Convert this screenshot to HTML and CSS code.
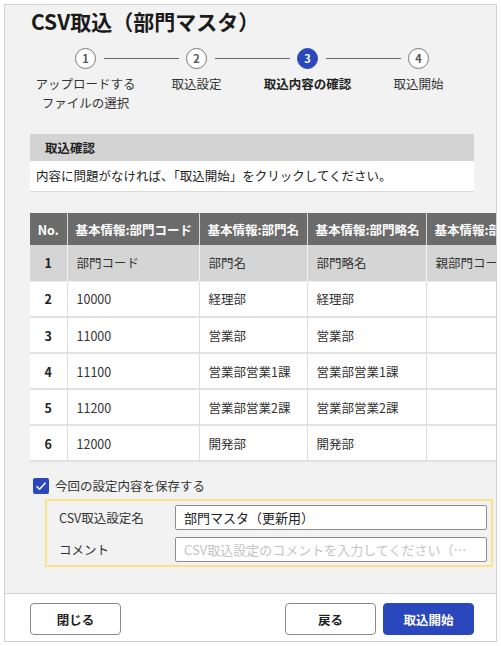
FILE: index.html
```html
<!DOCTYPE html>
<html lang="ja">
<head>
    <meta charset="UTF-8">
    <meta name="viewport" content="width=device-width, initial-scale=1.0">
    <title>CSV取込（部門マスタ）</title>
    <link rel="stylesheet" href="styles.css">
</head>
<body>
    <div class="dialog">
        <div class="dialog-body">
            <h1 class="title">CSV取込（部門マスタ）</h1>

            <!-- Steps -->
            <ol class="steps">
                <li class="step">
                    <span class="step-num">1</span>
                    <span class="step-label">アップロードする<br>ファイルの選択</span>
                </li>
                <li class="step">
                    <span class="step-num">2</span>
                    <span class="step-label">取込設定</span>
                </li>
                <li class="step active">
                    <span class="step-num">3</span>
                    <span class="step-label">取込内容の確認</span>
                </li>
                <li class="step">
                    <span class="step-num">4</span>
                    <span class="step-label">取込開始</span>
                </li>
            </ol>

            <!-- Confirm message -->
            <div class="notice">
                <div class="notice-head">取込確認</div>
                <div class="notice-text">内容に問題がなければ、「取込開始」をクリックしてください。</div>
            </div>

            <!-- Preview table -->
            <div class="table-wrap">
                <table class="preview">
                    <colgroup>
                        <col class="c-no">
                        <col class="c-code">
                        <col class="c-name">
                        <col class="c-short">
                        <col class="c-parent">
                    </colgroup>
                    <thead>
                        <tr>
                            <th>No.</th>
                            <th>基本情報:部門コード</th>
                            <th>基本情報:部門名</th>
                            <th>基本情報:部門略名</th>
                            <th>基本情報:部門親コード</th>
                        </tr>
                    </thead>
                    <tbody>
                        <tr class="title-row">
                            <td class="no">1</td>
                            <td>部門コード</td>
                            <td>部門名</td>
                            <td>部門略名</td>
                            <td>親部門コード</td>
                        </tr>
                        <tr>
                            <td class="no">2</td>
                            <td>10000</td>
                            <td>経理部</td>
                            <td>経理部</td>
                            <td></td>
                        </tr>
                        <tr>
                            <td class="no">3</td>
                            <td>11000</td>
                            <td>営業部</td>
                            <td>営業部</td>
                            <td></td>
                        </tr>
                        <tr>
                            <td class="no">4</td>
                            <td>11100</td>
                            <td>営業部営業1課</td>
                            <td>営業部営業1課</td>
                            <td></td>
                        </tr>
                        <tr>
                            <td class="no">5</td>
                            <td>11200</td>
                            <td>営業部営業2課</td>
                            <td>営業部営業2課</td>
                            <td></td>
                        </tr>
                        <tr>
                            <td class="no">6</td>
                            <td>12000</td>
                            <td>開発部</td>
                            <td>開発部</td>
                            <td></td>
                        </tr>
                    </tbody>
                </table>
            </div>

            <!-- Save settings -->
            <label class="save-check">
                <span class="checkbox">
                    <svg width="12" height="10" viewBox="0 0 12 10"><path d="M1.5 5.2 L4.6 8.2 L10.5 1.8" fill="none" stroke="#fff" stroke-width="1.6"/></svg>
                </span>
                今回の設定内容を保存する
            </label>
            <div class="save-box">
                <div class="field">
                    <span class="field-label">CSV取込設定名</span>
                    <input class="field-input" type="text" value="部門マスタ（更新用）">
                </div>
                <div class="field">
                    <span class="field-label">コメント</span>
                    <input class="field-input" type="text" placeholder="CSV取込設定のコメントを入力してください（任意）">
                </div>
            </div>
        </div>

        <div class="dialog-foot">
            <button class="btn">閉じる</button>
            <div class="foot-right">
                <button class="btn">戻る</button>
                <button class="btn primary">取込開始</button>
            </div>
        </div>
    </div>
</body>
</html>
```

FILE: styles.css
```css
/* Reset */
* {
    box-sizing: border-box;
    margin: 0;
    padding: 0;
}
body {
    background: #fff;
    font-family: "Noto Sans CJK JP", "Noto Sans", sans-serif;
    font-size: 12.5px;
    color: #222;
}

/* Dialog frame */
.dialog {
    margin: 4px;
    width: 493px;
    height: 638px;
    border: 1px solid #d2d2d2;
    background: #f2f2f2;
    display: flex;
    flex-direction: column;
}
.dialog-body {
    flex: 1;
    padding: 2px 0 0 25px;
    overflow: hidden;
}
.title {
    font-size: 21px;
    font-weight: bold;
    line-height: 29px;
    color: #1a1a1a;
    padding-left: 1px;
}

/* Steps */
.steps {
    list-style: none;
    display: flex;
    width: 444px;
    margin-top: 12px;
}
.step {
    flex: 1;
    position: relative;
    display: flex;
    flex-direction: column;
    align-items: center;
}
.step:not(:last-child)::after {
    content: "";
    position: absolute;
    top: 10px;
    left: calc(50% + 18px);
    width: 75px;
    border-top: 1px solid #666;
}
.step-num {
    width: 21px;
    height: 21px;
    border: 1.5px solid #777;
    border-radius: 50%;
    background: #fff;
    display: flex;
    align-items: center;
    justify-content: center;
    font-size: 11px;
    font-weight: bold;
    color: #555;
    line-height: 1;
}
.step-label {
    margin-top: 5px;
    line-height: 19px;
    text-align: center;
    color: #333;
}
.step.active .step-num {
    background: #2a47bd;
    border-color: #2a47bd;
    color: #fff;
}
.step.active .step-label {
    font-weight: bold;
    color: #222;
}

/* Notice box */
.notice {
    width: 444px;
    margin-top: 22px;
    box-shadow: 0 1px 0 #dcdcdc;
}
.notice-head {
    background: #d3d3d3;
    height: 27px;
    line-height: 27px;
    padding-left: 15px;
    font-weight: bold;
}
.notice-text {
    background: #fff;
    height: 30px;
    line-height: 30px;
    padding-left: 6px;
}

/* Preview table */
.table-wrap {
    margin-top: 22px;
    overflow: hidden;
}
.preview {
    border-collapse: collapse;
    table-layout: fixed;
    width: 536px;
    white-space: nowrap;
}
.c-no { width: 37px; }
.c-code { width: 132px; }
.c-name { width: 108px; }
.c-short { width: 119px; }
.c-parent { width: 140px; }
.preview th {
    background: #6b6b6b;
    color: #fff;
    font-weight: bold;
    height: 32px;
    text-align: left;
    padding-left: 8px;
    border-left: 1px solid #d8d8d8;
    overflow: hidden;
}
.preview th:first-child {
    border-left: none;
    text-align: center;
    padding-left: 0;
}
.preview td {
    background: #fff;
    height: 36px;
    padding-left: 9px;
    border-left: 1px solid #ddd;
    border-bottom: 2px solid #e2e2e2;
    color: #333;
    overflow: hidden;
}
.preview td.no {
    border-left: none;
    padding-left: 0;
    text-align: center;
    font-weight: bold;
    color: #222;
}
.preview .title-row td {
    background: #d5d5d5;
    border-left-color: #f2f2f2;
    border-bottom: 1px solid #f2f2f2;
}

/* Save settings */
.save-check {
    display: flex;
    align-items: center;
    gap: 6px;
    margin: 15px 0 0 3px;
    height: 17px;
    color: #333;
}
.checkbox {
    width: 16px;
    height: 16px;
    border-radius: 2px;
    background: #2a47bd;
    display: flex;
    align-items: center;
    justify-content: center;
}
.save-box {
    margin: 5px 3px 0 15px;
    border: 2px solid #fbe38e;
    background: #f2f2f2;
    padding: 4px 4px 3px 12px;
    display: flex;
    flex-direction: column;
    gap: 7px;
}
.field {
    display: flex;
    align-items: center;
}
.field-label {
    width: 116px;
    color: #333;
}
.field-input {
    flex: 1;
    height: 25px;
    border: 1px solid #8c8c8c;
    border-radius: 2px;
    padding: 0 8px;
    font-family: inherit;
    font-size: 13px;
    color: #222;
    background: #fff;
    text-overflow: ellipsis;
}
.field-input::placeholder {
    color: #c4c4c4;
}

/* Footer */
.dialog-foot {
    height: 48px;
    border-top: 1px solid #d2d2d2;
    background: #fff;
    display: flex;
    justify-content: space-between;
    padding: 9px 22px 0 25px;
}
.foot-right {
    display: flex;
    gap: 7px;
}
.btn {
    width: 91px;
    height: 32px;
    border: 1.5px solid #8a8a8a;
    border-radius: 4px;
    background: #fff;
    font-family: inherit;
    font-size: 12.5px;
    font-weight: bold;
    color: #222;
    cursor: pointer;
}
.btn.primary {
    background: #2a47bd;
    border-color: #2a47bd;
    color: #fff;
}
```
